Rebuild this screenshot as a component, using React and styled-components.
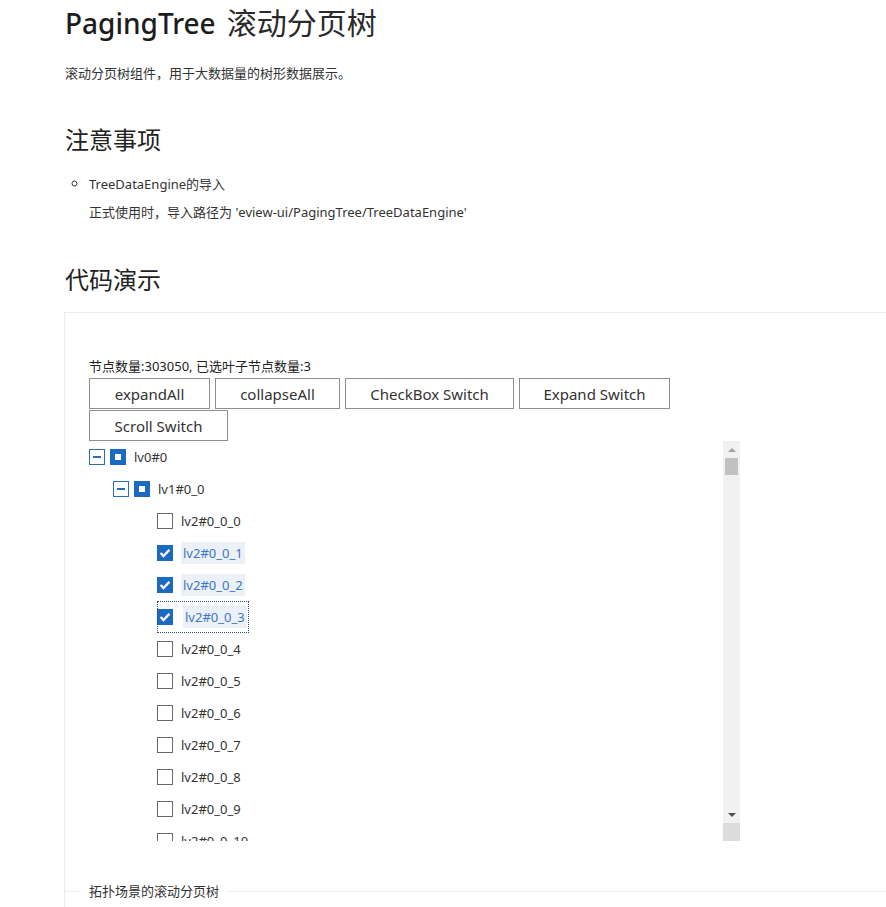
import React from "react";
import styled, { createGlobalStyle } from "styled-components";

const GlobalStyle = createGlobalStyle`
  body {
    margin: 0;
    overflow: hidden;
    background: #fff;
    color: #333;
    font-family: "Noto Sans", "Noto Sans CJK SC", sans-serif;
  }
`;

const treeRows = [
  { label: "lv0#0", level: 0, expander: true, state: "half" },
  { label: "lv1#0_0", level: 1, expander: true, state: "half" },
  ...Array.from({ length: 11 }, (_, i) => ({
    label: `lv2#0_0_${i}`,
    level: 2,
    state: i >= 1 && i <= 3 ? "checked" : "none",
    focused: i === 3,
  })),
];

const CheckBox = ({ state }) => (
  <Box state={state}>
    {state === "checked" && (
      <svg width="14" height="14" viewBox="0 0 14 14">
        <path d="M2.6 7 L5.6 10 L11.4 3.8" fill="none" stroke="#fff" strokeWidth="2.4" />
      </svg>
    )}
    {state === "half" && <HalfMark />}
  </Box>
);

export default function App() {
  return (
    <Page>
      <GlobalStyle />
      <Title>
        PagingTree<TitleCn>滚动分页树</TitleCn>
      </Title>
      <Desc>滚动分页树组件，用于大数据量的树形数据展示。</Desc>

      <SubTitle>注意事项</SubTitle>
      <NoteList>
        <li>
          TreeDataEngine的导入
          <NoteLine>正式使用时，导入路径为 'eview-ui/PagingTree/TreeDataEngine'</NoteLine>
        </li>
      </NoteList>

      <SubTitle demo>代码演示</SubTitle>
      <DemoCard>
        <DemoBody>
          <Counter>节点数量:303050, 已选叶子节点数量:3</Counter>
          <ButtonBar>
            <Button w={121}>expandAll</Button>
            <Button w={125}>collapseAll</Button>
            <Button w={169}>CheckBox Switch</Button>
            <Button w={151}>Expand Switch</Button>
            <Button w={139}>Scroll Switch</Button>
          </ButtonBar>
          <TreeFrame>
            <TreeList>
              {treeRows.map((row) => (
                <Row key={row.label} level={row.level}>
                  {row.expander && <Expander />}
                  <NodeHit focused={row.focused}>
                    <CheckBox state={row.state} />
                    <Label checked={row.state === "checked"} focused={row.focused}>
                      {row.label}
                    </Label>
                  </NodeHit>
                </Row>
              ))}
            </TreeList>
            <ScrollBar>
              <ScrollTrack>
                <ArrowBtn>
                  <Tri up />
                </ArrowBtn>
                <Thumb />
                <TrackFill />
                <ArrowBtn>
                  <Tri />
                </ArrowBtn>
              </ScrollTrack>
              <Corner />
            </ScrollBar>
          </TreeFrame>
        </DemoBody>
        <MetaDivider>
          <DividerLead />
          <MetaTitle>拓扑场景的滚动分页树</MetaTitle>
          <DividerRest />
        </MetaDivider>
      </DemoCard>
    </Page>
  );
}

const Page = styled.div`
  padding-left: 64px;
  padding-top: 1px;
  width: 860px;
`;

const Title = styled.h1`
  margin: 2px 0 0 1px;
  font-size: 28px;
  line-height: 40px;
  font-weight: 500;
  color: #1c1c1c;
`;

const TitleCn = styled.span`
  margin-left: 11px;
  font-size: 30px;
  font-weight: 400;
  color: #2a2a2a;
`;

const Desc = styled.p`
  margin: 20px 0 0 1px;
  font-size: 13px;
  line-height: 20px;
  color: #333;
`;

const SubTitle = styled.h2`
  margin: ${({ demo }) => (demo ? "37px" : "40px")} 0 0 1px;
  font-size: 24px;
  line-height: 34px;
  font-weight: 400;
  color: #222;
`;

const NoteList = styled.ul`
  margin: 13px 0 0;
  padding-left: 25px;
  list-style: circle;
  font-size: 13px;
  line-height: 28px;
  color: #333;

  li::marker {
    font-size: 14px;
  }
`;

const NoteLine = styled.div`
  line-height: 28px;
`;

const DemoCard = styled.div`
  margin-top: 15px;
  border: 1px solid #ececec;
  border-right: none;
  border-bottom: none;
  width: 860px;
  height: 600px;
`;

const DemoBody = styled.div`
  padding: 43px 0 0 24px;
`;

const Counter = styled.div`
  font-size: 13px;
  line-height: 20px;
  color: #222;
`;

const ButtonBar = styled.div`
  display: flex;
  flex-wrap: wrap;
  column-gap: 5px;
  row-gap: 1px;
  width: 590px;
  margin-top: 2px;
`;

const Button = styled.button`
  box-sizing: border-box;
  width: ${({ w }) => w}px;
  height: 31px;
  margin: 0;
  padding: 0;
  border: 1px solid #8f8f8f;
  background: #fff;
  color: #333;
  font-family: "Noto Sans", sans-serif;
  font-size: 15px;
  cursor: pointer;
`;

const TreeFrame = styled.div`
  display: flex;
  width: 651px;
  height: 400px;
`;

const TreeList = styled.div`
  flex: 1;
  overflow: hidden;
`;

const Row = styled.div`
  display: flex;
  align-items: center;
  gap: 5px;
  height: 32px;
  padding-left: ${({ level }) => (level === 2 ? 68 : level * 24)}px;
`;

const Expander = styled.span`
  position: relative;
  box-sizing: border-box;
  width: 16px;
  height: 16px;
  border: 1px solid #2a6cb8;
  background: #fff;

  &::after {
    content: "";
    position: absolute;
    left: 3px;
    right: 3px;
    top: 6px;
    height: 2px;
    background: #2a6cb8;
  }
`;

const NodeHit = styled.div`
  display: flex;
  align-items: center;
  gap: 8px;
  height: 32px;
  box-sizing: border-box;
  padding-right: 2px;
  outline: ${({ focused }) => (focused ? "1px dotted #1d4f8f" : "none")};
  outline-offset: -1px;
`;

const Box = styled.span`
  box-sizing: border-box;
  display: flex;
  align-items: center;
  justify-content: center;
  width: 16px;
  height: 16px;
  border: 1px solid ${({ state }) => (state === "none" ? "#6b6b6b" : "#1b6ac2")};
  background: ${({ state }) => (state === "none" ? "#fff" : "#1b6ac2")};
`;

const HalfMark = styled.span`
  width: 6px;
  height: 6px;
  background: #fff;
`;

const Label = styled.span`
  font-size: 13px;
  line-height: 22px;
  padding: 0 ${({ checked }) => (checked ? "2px" : "0")};
  margin-left: ${({ focused }) => (focused ? "2px" : "0")};
  color: ${({ checked }) => (checked ? "#3a77c6" : "#333")};
  background: ${({ checked }) => (checked ? "#ecf1f8" : "transparent")};
`;

const ScrollBar = styled.div`
  width: 17px;
  display: flex;
  flex-direction: column;
`;

const ScrollTrack = styled.div`
  flex: 1;
  display: flex;
  flex-direction: column;
  background: #f1f1f1;
`;

const ArrowBtn = styled.div`
  height: 17px;
  display: flex;
  align-items: center;
  justify-content: center;
`;

const Tri = styled.span`
  width: 0;
  height: 0;
  border-left: 4px solid transparent;
  border-right: 4px solid transparent;
  ${({ up }) =>
    up ? "border-bottom: 4px solid #a3a3a3;" : "border-top: 4px solid #505050;"}
`;

const Thumb = styled.div`
  height: 17px;
  margin: 0 2px;
  background: #c1c1c1;
`;

const TrackFill = styled.div`
  flex: 1;
`;

const Corner = styled.div`
  height: 18px;
  background: #dcdcdc;
`;

const MetaDivider = styled.div`
  display: flex;
  align-items: center;
  margin-top: 40px;
`;

const DividerLead = styled.span`
  width: 16px;
  height: 1px;
  background: #ececec;
`;

const MetaTitle = styled.span`
  padding: 0 8px;
  font-size: 13px;
  line-height: 20px;
  color: #333;
`;

const DividerRest = styled.span`
  flex: 1;
  height: 1px;
  background: #ececec;
`;
